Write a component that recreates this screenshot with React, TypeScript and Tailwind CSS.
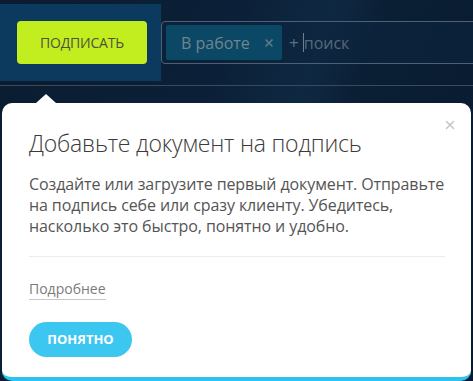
import { X } from "lucide-react";

function TopBar() {
  return (
    <div className="flex h-[86px] border-b border-[#3a4a5a] pt-1">
      <div className="h-[77px] w-[161px] shrink-0 bg-[#0c3a5e] pl-[17px] pt-[17px]">
        <button className="flex h-[43px] w-[130px] items-center justify-center rounded-[4px] bg-[#c2ee1f] text-[14px] font-medium tracking-[-0.2px] text-[#50503e]">
          ПОДПИСАТЬ
        </button>
      </div>
      <div className="mt-[17px] flex h-[43px] flex-1 items-center -mr-4 rounded-[4px] border border-[#4c6172] bg-[#0e2540]/60 pl-1">
        <div className="flex h-[35px] w-[116px] items-center justify-between rounded-[2px] bg-[#0a4866] pl-[15px] pr-[7px]">
          <span className="text-[16px] text-[#71858f]">В работе</span>
          <X size={12} strokeWidth={3.5} className="text-[#5f7883]" />
        </div>
        <span className="ml-[7px] text-[17px] text-[#5d7180]">+</span>
        <span className="ml-[4px] h-[19px] w-px bg-[#6e808c]" />
        <span className="text-[16px] text-[#56697a]">поиск</span>
      </div>
    </div>
  );
}

function Hint() {
  return (
    <div className="relative mx-[2px] pt-[8px]">
      <div className="ml-[34px] h-0 w-0 border-x-[10px] border-b-[9px] border-x-transparent border-b-white" />
      <div className="relative h-[278px] rounded-[10px] border-b-[4px] border-[#2ec3ef] bg-white pl-[27px] pr-[20px] pt-[25px]">
        <button className="absolute right-[14px] top-[15px] text-[#c4c4c4]">
          <X size={14} strokeWidth={2.5} />
        </button>
        <h2 className="text-[23px] font-light leading-[30px] tracking-[-0.2px] text-[#3b3b3b]">
          Добавьте документ на подпись
        </h2>
        <p className="mt-[16px] whitespace-nowrap text-[16px] leading-[21px] tracking-[-0.1px] text-[#555]">
          Создайте или загрузите первый документ. Отправьте
          <br />
          на подпись себе или сразу клиенту. Убедитесь,
          <br />
          насколько это быстро, понятно и удобно.
        </p>
        <div className="mr-[6px] mt-[19px] h-px bg-[#ececec]" />
        <div className="mt-[19px]">
          <a className="inline-block border-b border-[#c8c8c8] pb-[1px] text-[14px] leading-[18px] text-[#7a7a7a]">
            Подробнее
          </a>
        </div>
        <button className="mt-[22px] flex h-[35px] w-[103px] items-center justify-center rounded-full bg-[#3cc7f1] text-[13px] font-bold text-white">
          ПОНЯТНО
        </button>
      </div>
    </div>
  );
}

export default function App() {
  return (
    <div
      className="h-[381px] w-[473px] overflow-hidden bg-[linear-gradient(110deg,#0a1c30_0%,#0b2038_40%,#0f2842_55%,#0a1e34_65%,#081a2e_100%)]"
      style={{ fontFamily: '"Open Sans", "Noto Sans", sans-serif' }}
    >
      <TopBar />
      <Hint />
    </div>
  );
}
